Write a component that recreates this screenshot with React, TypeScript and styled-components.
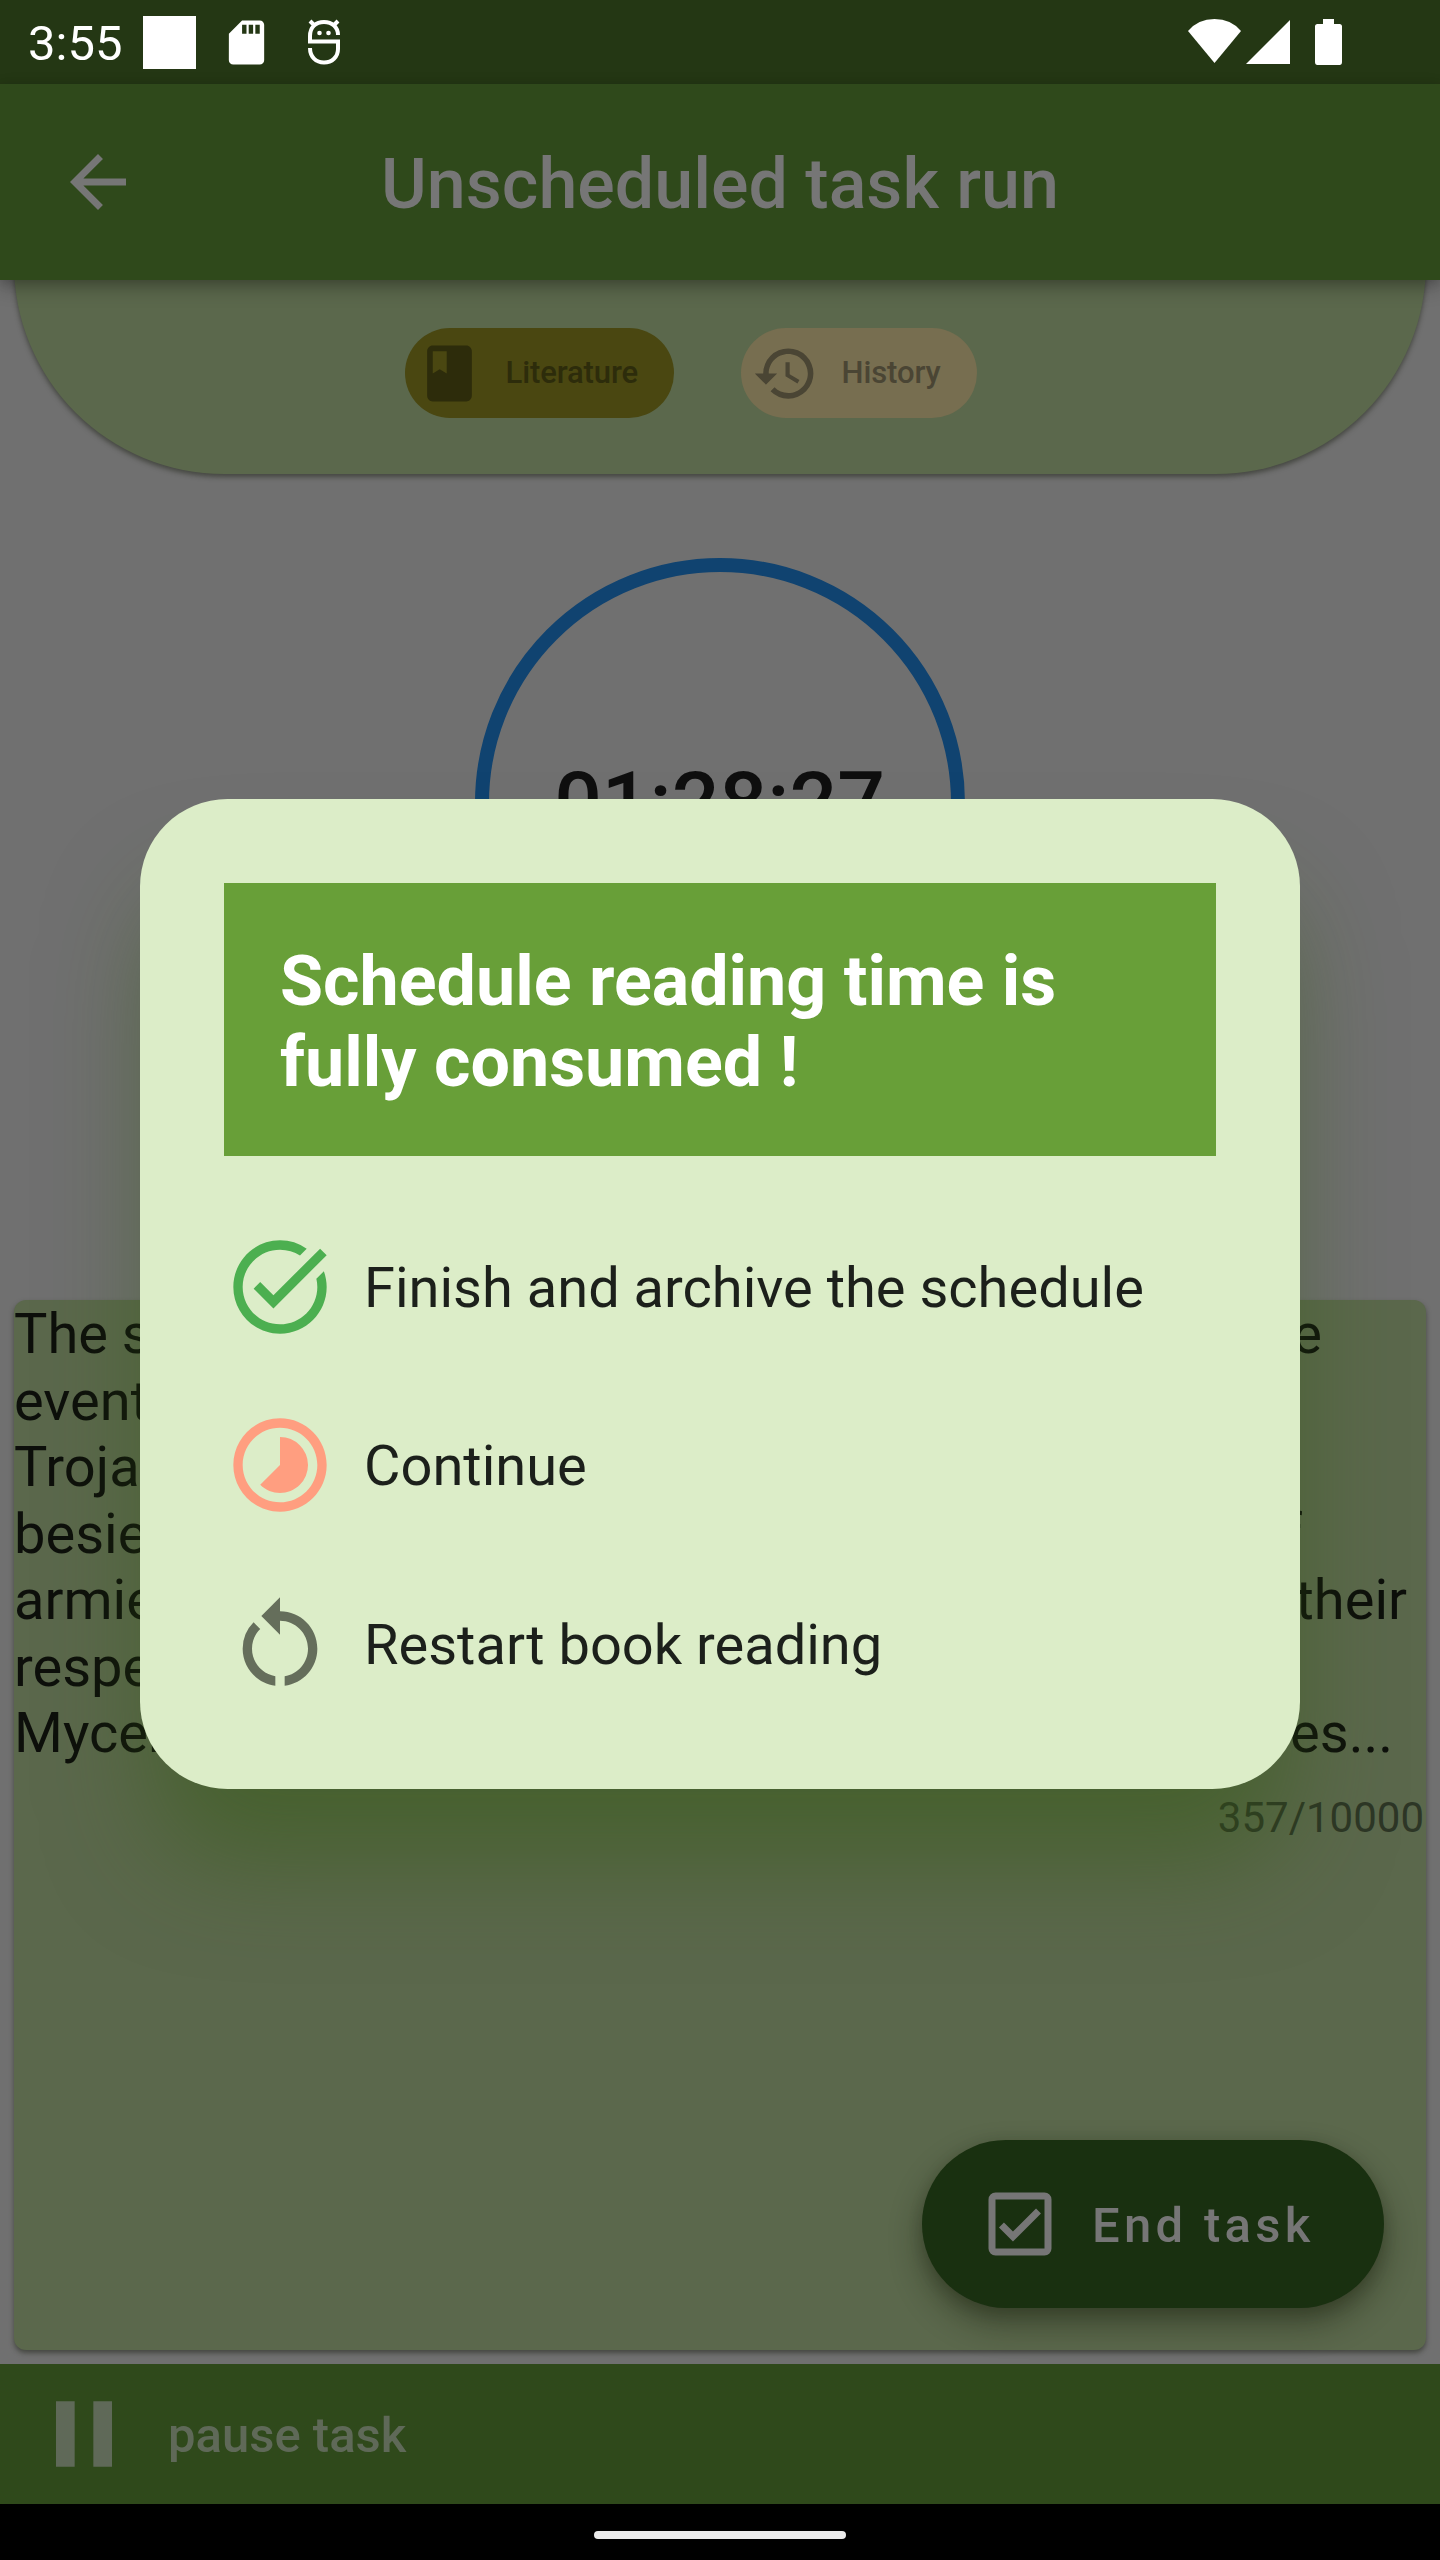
import React from "react";
import styled, { createGlobalStyle } from "styled-components";
import {
  MdArrowBack,
  MdBook,
  MdHistory,
  MdPause,
  MdRestartAlt,
  MdSdCard,
  MdTaskAlt,
  MdTimelapse,
} from "react-icons/md";

const GlobalStyle = createGlobalStyle`
  *, *::before, *::after { box-sizing: border-box; }
  body { margin: 0; background: #707070; }
  svg { display: block; flex: none; }
`;

const Screen = styled.div`
  position: relative;
  display: flex;
  flex-direction: column;
  width: 1440px;
  height: 2560px;
  overflow: hidden;
  background: #707070;
  font-family: Roboto, "Liberation Sans", sans-serif;
`;

const StatusBar = styled.header`
  display: flex;
  align-items: center;
  justify-content: space-between;
  height: 84px;
  padding: 0 98px 0 28px;
  background: #243714;
  color: #fff;
  z-index: 2;
`;

const StatusGroup = styled.div`
  display: flex;
  align-items: center;
`;

const NotificationIcons = styled.div`
  display: flex;
  align-items: center;
  gap: 35px;
`;

const Clock = styled.span`
  width: 115px;
  padding-top: 4px;
  font-size: 49px;
  line-height: 58px;
  white-space: nowrap;
`;

const NotificationSquare = styled.span`
  width: 53px;
  height: 53px;
  margin-right: 24px;
  background: #fff;
`;

const AppBar = styled.nav`
  display: grid;
  grid-template-columns: 196px 1fr 196px;
  align-items: center;
  height: 196px;
  background: #2f491b;
  color: #767676;
  box-shadow: 0 8px 18px rgba(0, 0, 0, 0.24), 0 3px 10px rgba(0, 0, 0, 0.14);
  z-index: 2;
`;

const BackButton = styled.div`
  padding-left: 56px;
`;

const Title = styled.h1`
  margin: 0;
  padding-top: 3px;
  font-size: 70px;
  font-weight: 500;
  line-height: 82px;
  text-align: center;
  white-space: nowrap;
`;

const Content = styled.main`
  display: flex;
  flex-direction: column;
  align-items: center;
  height: 2084px;
  padding: 0 14px;
`;

const CategoryCard = styled.section`
  display: flex;
  justify-content: center;
  align-items: flex-end;
  gap: 67px;
  width: 100%;
  height: 244px;
  margin-top: -50px;
  padding: 0 59px 56px 0;
  border-radius: 0 0 210px 210px;
  background: #5b684c;
  box-shadow: 0 3px 5px rgba(25, 30, 18, 0.5);
`;

const Chip = styled.div<{ $bg: string; $fg: string; $width: number }>`
  display: flex;
  align-items: center;
  gap: 23px;
  width: ${(p) => p.$width}px;
  height: 90px;
  padding-left: 11px;
  border-radius: 45px;
  background: ${(p) => p.$bg};
  color: ${(p) => p.$fg};
  font-size: 31px;
  font-weight: 500;
  letter-spacing: -0.1px;
  white-space: nowrap;
`;

const ChipLabel = styled.span`
  padding-bottom: 2px;
`;

const TimerRing = styled.div`
  display: flex;
  align-items: center;
  justify-content: center;
  flex: none;
  width: 490px;
  height: 490px;
  margin-top: 84px;
  padding: 0 1px 1px 0;
  border: 14px solid #104370;
  border-radius: 50%;
  color: #0f0f0f;
  font-size: 84px;
  font-weight: 500;
`;

const Notes = styled.section`
  width: 100%;
  height: 1050px;
  margin-top: 252px;
  padding: 1px 2px 0 0;
  border-radius: 12px;
  background: #5b684c;
  box-shadow: 0 3px 5px rgba(25, 30, 18, 0.5);
`;

const NoteLine = styled.div<{ $inset: number }>`
  display: flex;
  justify-content: space-between;
  height: 66.5px;
  padding-right: ${(p) => p.$inset}px;
  color: #0d0f0b;
  font-size: 56px;
  line-height: 66.5px;
  white-space: nowrap;
`;

const Counter = styled.div`
  padding-top: 26px;
  color: #2d3626;
  font-size: 42px;
  line-height: 49px;
  text-align: right;
`;

const EndTaskButton = styled.div`
  position: absolute;
  left: 922px;
  top: 2140px;
  display: flex;
  align-items: center;
  gap: 30px;
  width: 462px;
  height: 168px;
  padding-left: 56px;
  border-radius: 84px;
  background: #193010;
  color: #767676;
  font-size: 49px;
  font-weight: 500;
  letter-spacing: 4.3px;
  white-space: nowrap;
  box-shadow: 0 16px 32px rgba(20, 26, 8, 0.45), 0 4px 14px rgba(20, 26, 8, 0.18);
`;

const ButtonLabel = styled.span`
  padding-top: 2px;
`;

const BottomBar = styled.footer`
  display: flex;
  align-items: center;
  gap: 28px;
  height: 140px;
  padding-left: 28px;
  background: #2f491b;
  color: #5f6958;
  font-size: 49px;
  font-weight: 500;
`;

const SystemNav = styled.div`
  display: flex;
  justify-content: center;
  height: 56px;
  padding-top: 27px;
  background: #000;
`;

const Handle = styled.span`
  width: 252px;
  height: 8px;
  border-radius: 4px;
  background: #ececec;
`;

const Dialog = styled.div`
  position: absolute;
  left: 140px;
  top: 799px;
  width: 1160px;
  height: 990px;
  padding: 84px;
  border-radius: 87.5px;
  background: #dcedc8;
  color: #1c201b;
  z-index: 3;
  box-shadow: 0 84px 104px -14px rgba(51, 90, 20, 0.52);
`;

const DialogTitle = styled.h2`
  height: 272.5px;
  margin: 0 0 75px;
  padding: 58px 56px 54px;
  background: #689f38;
  color: #fff;
  font-size: 70px;
  font-weight: 700;
  line-height: 80.5px;
`;

const Option = styled.div<{ $color: string }>`
  display: flex;
  align-items: center;
  gap: 28px;
  height: 112px;
  margin-bottom: 66.7px;
  font-size: 56px;
  white-space: nowrap;

  svg {
    color: ${(p) => p.$color};
  }
`;

function DebugBugIcon() {
  return (
    <svg width="32" height="46" viewBox="0 0 32 46" fill="none" stroke="#fff" strokeWidth="4">
      <path d="M2 22V17C2 8 8 3 16 3s14 5 14 13" />
      <path d="M0 22.500H30V30C30 38 24 43.500 16 43.500S2 38 2 29" />
      <path d="M2 2l4 4M30 2l-4 4" />
      <circle cx="11.500" cy="14" r="2.300" fill="#fff" stroke="none" />
      <circle cx="20.500" cy="14" r="2.300" fill="#fff" stroke="none" />
    </svg>
  );
}

function SignalIcons() {
  return (
    <svg width="154" height="48" viewBox="0 0 154 48" fill="#fff">
      <path d="M0 13Q10 1 26.500 1T53 13L26.500 45Z" />
      <path d="M58 46L102 2V46Z" />
      <path d="M135 1h11v5h5.500q2.500 0 2.500 2.500V44q0 3-2.500 3h-22q-2.500 0-2.500-3V8.500Q127 6 129.500 6H135Z" />
    </svg>
  );
}

function CheckBoxIcon() {
  return (
    <svg width="84" height="84" viewBox="0 0 24 24" fill="currentColor">
      <path d="M19 3H5a2 2 0 0 0-2 2v14a2 2 0 0 0 2 2h14a2 2 0 0 0 2-2V5a2 2 0 0 0-2-2zm0 16H5V5h14v14zM17.990 9l-1.410-1.420-6.590 6.590-2.580-2.570-1.420 1.410 4 3.990z" />
    </svg>
  );
}

const noteLines = [
  { start: "The story", end: "the", inset: 102 },
  { start: "events", end: "", inset: 0 },
  { start: "Trojan", end: "", inset: 0 },
  { start: "besieged", end: "of", inset: 122 },
  { start: "armies", end: "their", inset: 17 },
  { start: "respective", end: "", inset: 0 },
  { start: "Mycenaean", end: "heroes...", inset: 31 },
];

const options = [
  { label: "Finish and archive the schedule", color: "#4caf50", Icon: MdTaskAlt },
  { label: "Continue", color: "#ff9e80", Icon: MdTimelapse },
  { label: "Restart book reading", color: "#656e5b", Icon: MdRestartAlt },
];

export default function App() {
  return (
    <>
      <GlobalStyle />
      <Screen>
        <StatusBar>
          <StatusGroup>
            <Clock>3:55</Clock>
            <NotificationSquare />
            <NotificationIcons>
              <MdSdCard size={53} />
              <DebugBugIcon />
            </NotificationIcons>
          </StatusGroup>
          <SignalIcons />
        </StatusBar>
        <AppBar>
          <BackButton>
            <MdArrowBack size={84} />
          </BackButton>
          <Title>Unscheduled task run</Title>
        </AppBar>
        <Content>
          <CategoryCard>
            <Chip $bg="#4a4711" $fg="#2d2c0b" $width={269}>
              <MdBook size={67} />
              <ChipLabel>Literature</ChipLabel>
            </Chip>
            <Chip $bg="#776e50" $fg="#4a4534" $width={236}>
              <MdHistory size={67} />
              <ChipLabel>History</ChipLabel>
            </Chip>
          </CategoryCard>
          <TimerRing>01:28:27</TimerRing>
          <Notes>
            {noteLines.map((line) => (
              <NoteLine key={line.start} $inset={line.inset}>
                <span>{line.start}</span>
                <span>{line.end}</span>
              </NoteLine>
            ))}
            <Counter>357/10000</Counter>
          </Notes>
        </Content>
        <BottomBar>
          <MdPause size={112} />
          <ButtonLabel>pause task</ButtonLabel>
        </BottomBar>
        <SystemNav>
          <Handle />
        </SystemNav>
        <EndTaskButton>
          <CheckBoxIcon />
          <ButtonLabel>End task</ButtonLabel>
        </EndTaskButton>
        <Dialog>
          <DialogTitle>Schedule reading time is fully consumed !</DialogTitle>
          {options.map(({ label, color, Icon }) => (
            <Option key={label} $color={color}>
              <Icon size={112} />
              <ButtonLabel>{label}</ButtonLabel>
            </Option>
          ))}
        </Dialog>
      </Screen>
    </>
  );
}
